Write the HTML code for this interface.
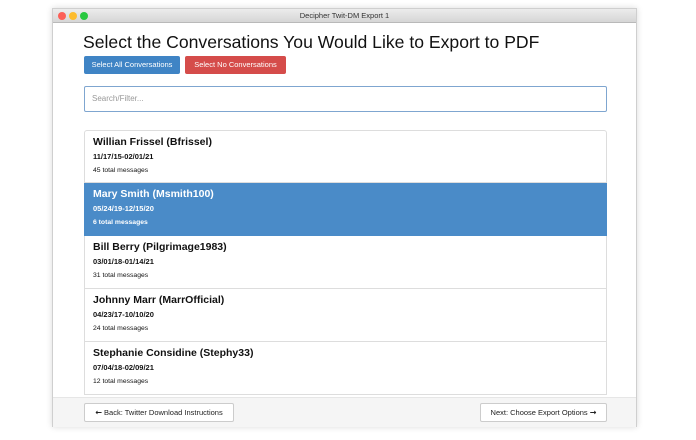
<!DOCTYPE html>
<html><head><style>
*{box-sizing:border-box;margin:0;padding:0}
body{width:696px;height:440px;background:#fff;font-family:"Liberation Sans",Arial,sans-serif;position:relative;overflow:hidden}
.win{position:absolute;left:52px;top:8px;width:585px;height:419px;border:1px solid #cfcfcf;background:#fff;box-shadow:0 0 6px rgba(0,0,0,.15)}
.tb{position:absolute;left:0;top:0;width:100%;height:14px;background:linear-gradient(#ececec,#d6d6d6);border-bottom:1px solid #b9b9b9;font-size:7.5px;text-align:center;line-height:14px;color:#333}
.dot{position:absolute;top:3px;width:8px;height:8px;border-radius:50%}
h1{position:absolute;left:30px;top:23px;font-size:17.6px;font-weight:normal;color:#111;white-space:nowrap}
.btn{position:absolute;height:18px;border-radius:2px;font-size:7.5px;line-height:18px;text-align:center;color:#fff}
.search{position:absolute;left:31px;top:77px;width:523px;height:26px;border:1px solid #7fa6d0;border-radius:2px;font-size:8px;color:#999;line-height:24px;padding-left:7px}
.list{position:absolute;left:31px;top:121px;width:523px;height:267px;overflow:hidden}
.it{height:53px;border:1px solid #ddd;border-top:none;padding:4px 8px;color:#111}
.it:first-child{border-top:1px solid #ddd;border-radius:3px 3px 0 0}
.it b{display:block;font-size:10.5px;margin-top:1px}
.it .d{font-size:7.5px;font-weight:bold;margin-top:4px}
.it .m{font-size:6.8px;margin-top:6px}
.sel{background:#4a8bc8;border-color:#4a8bc8;color:#fff}
.foot{position:absolute;left:0;top:388px;width:100%;height:30px;background:#f5f5f5;border-top:1px solid #e6e6e6}
.fb{position:absolute;top:5px;height:19px;border:1px solid #ccc;border-radius:2px;background:#fff;font-size:7.5px;line-height:17px;text-align:center;color:#222}
.ar{font-weight:bold;font-family:"DejaVu Sans",sans-serif;font-size:8px}
</style></head><body>
<div class="win">
<div class="tb">Decipher Twit-DM Export 1
<span class="dot" style="left:5px;background:#fc5f57"></span><span class="dot" style="left:16px;background:#fdbc2e"></span><span class="dot" style="left:27px;background:#29c840"></span></div>
<h1>Select the Conversations You Would Like to Export to PDF</h1>
<div class="btn" style="left:31px;top:47px;width:96px;background:#3f84c5">Select All Conversations</div>
<div class="btn" style="left:132px;top:47px;width:101px;background:#d54c4a">Select No Conversations</div>
<div class="search">Search/Filter...</div>
<div class="list">
<div class="it"><b>Willian Frissel (Bfrissel)</b><div class="d">11/17/15-02/01/21</div><div class="m">45 total messages</div></div>
<div class="it sel"><b>Mary Smith (Msmith100)</b><div class="d">05/24/19-12/15/20</div><div class="m" style="font-weight:bold">6 total messages</div></div>
<div class="it"><b>Bill Berry (Pilgrimage1983)</b><div class="d">03/01/18-01/14/21</div><div class="m">31 total messages</div></div>
<div class="it"><b>Johnny Marr (MarrOfficial)</b><div class="d">04/23/17-10/10/20</div><div class="m">24 total messages</div></div>
<div class="it"><b>Stephanie Considine (Stephy33)</b><div class="d">07/04/18-02/09/21</div><div class="m">12 total messages</div></div>
</div>
<div class="foot">
<div class="fb" style="left:31px;width:150px"><span class="ar">&#x2190;</span> Back: Twitter Download Instructions</div>
<div class="fb" style="left:427px;width:127px">Next: Choose Export Options <span class="ar">&#x2192;</span></div>
</div>
</div>
</body></html>
